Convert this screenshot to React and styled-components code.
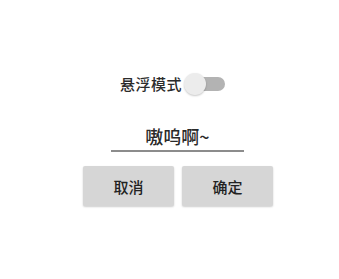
import React, { useState } from "react";
import styled, { createGlobalStyle } from "styled-components";

const Global = createGlobalStyle`
  html, body {
    margin: 0;
    padding: 0;
    background: #ffffff;
    font-family: "Noto Sans CJK SC", "Noto Sans", sans-serif;
  }
`;

const Screen = styled.div`
  width: 339px;
  height: 279px;
  padding-top: 73px;
  box-sizing: border-box;
`;

const Panel = styled.div`
  width: 191px;
  margin-left: 83px;
  display: flex;
  flex-direction: column;
`;

const ToggleRow = styled.label`
  display: flex;
  align-items: center;
  margin-left: 37px;
  height: 22px;
  gap: 2px;
`;

const Label = styled.span`
  font-size: 15px;
  font-weight: 500;
  line-height: 22px;
  color: #2b2b2b;
  letter-spacing: 0.5px;
`;

const Track = styled.span`
  position: relative;
  width: 41px;
  height: 22px;
  display: inline-block;
  &::before {
    content: "";
    position: absolute;
    left: 9px;
    top: 4px;
    width: 32px;
    height: 14px;
    border-radius: 7px;
    background: ${(p) => (p.$on ? "#9fc9c4" : "#b3b3b3")};
  }
`;

const Thumb = styled.span`
  position: absolute;
  top: 0;
  left: ${(p) => (p.$on ? "20px" : "0")};
  width: 22px;
  height: 22px;
  border-radius: 50%;
  background: #ececec;
  box-shadow: 0 1px 2px rgba(0, 0, 0, 0.22);
`;

const Field = styled.input`
  margin: 29px 0 0 28px;
  width: 133px;
  height: 28px;
  box-sizing: border-box;
  border: none;
  border-bottom: 2px solid #8c8c8c;
  outline: none;
  background: transparent;
  text-align: center;
  font-family: inherit;
  font-size: 18px;
  font-weight: 500;
  color: #2a2a2a;
  padding: 0 0 3px;
`;

const Buttons = styled.div`
  margin-top: 14px;
  display: grid;
  grid-template-columns: 91px 91px;
  gap: 8px;
`;

const Button = styled.button`
  height: 40px;
  border: none;
  border-radius: 2px;
  background: #d6d6d6;
  box-shadow: 0 1px 2px rgba(0, 0, 0, 0.2);
  font-family: inherit;
  font-size: 15px;
  font-weight: 500;
  color: #222;
  padding: 0;
`;

export default function App() {
  const [on, setOn] = useState(false);
  const [text, setText] = useState("嗷呜啊~");
  return (
    <Screen>
      <Global />
      <Panel>
        <ToggleRow onClick={() => setOn(!on)}>
          <Label>悬浮模式</Label>
          <Track $on={on}>
            <Thumb $on={on} />
          </Track>
        </ToggleRow>
        <Field value={text} onChange={(e) => setText(e.target.value)} />
        <Buttons>
          <Button>取消</Button>
          <Button>确定</Button>
        </Buttons>
      </Panel>
    </Screen>
  );
}
